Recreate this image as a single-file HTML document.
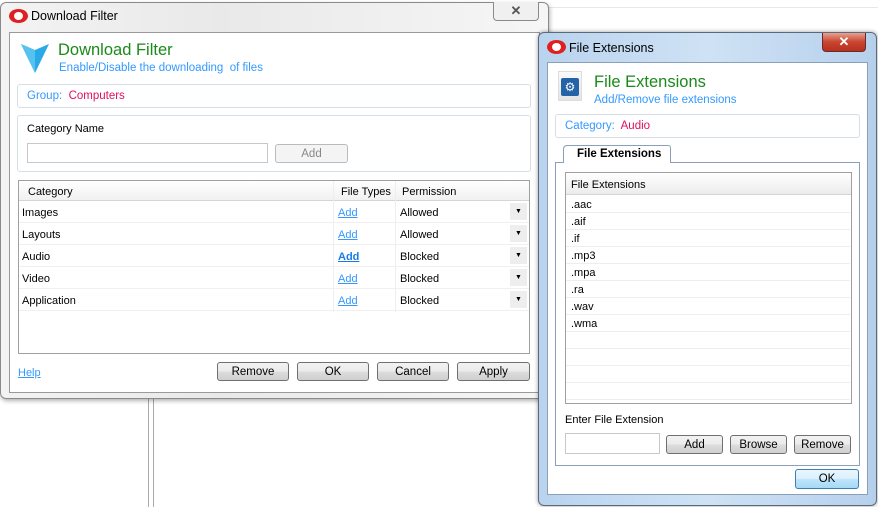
<!DOCTYPE html><html><head><style>
*{box-sizing:border-box;margin:0;padding:0}
body{width:878px;height:507px;background:#fff;position:relative;overflow:hidden;font-family:"Liberation Sans",sans-serif;font-size:11px;color:#000}
.a{position:absolute}
.btn{position:absolute;border:1px solid #707070;border-radius:3px;background:linear-gradient(#f2f2f2 0,#ebebeb 50%,#dddddd 51%,#cfcfcf 100%);text-align:center;font-size:11.5px;line-height:18px}
.box{position:absolute;border:1px solid #d5dfe5;border-radius:3px;background:#fff}
.lnk{color:#3399ff;text-decoration:underline}
.row{position:absolute;left:0;right:0;height:22px;border-bottom:1px solid #f0f0f0}
.row span{margin-top:1px}
</style></head><body>
<div class="a" style="left:148px;top:398px;width:1px;height:109px;background:#aaa"></div>
<div class="a" style="left:153px;top:398px;width:1px;height:109px;background:#aaa"></div>
<div class="a" style="left:548px;top:7px;width:330px;height:1px;background:#e8e8e8"></div>

<!-- Window 1 -->
<div class="a" style="left:0;top:2px;width:549px;height:397px;border:1px solid #8a8a8a;border-radius:6px;background:linear-gradient(90deg,#f3f3f3,#e9e9e9 40%,#f6f6f6);box-shadow:1px 2px 4px rgba(0,0,0,.3)"></div>
<div class="a" style="left:9px;top:9px;width:19px;height:14px;background:#e02020;border-radius:50%"></div>
<div class="a" style="left:14px;top:12px;width:9px;height:8px;background:#fff;border-radius:50%"></div>
<div class="a" style="left:31px;top:9px;font-size:12.5px">Download Filter</div>
<div class="a" style="left:493px;top:2px;width:46px;height:19px;border:1px solid #8a8a8a;border-top:none;border-radius:0 0 4px 4px;background:#f0f0f0;text-align:center;font-size:13px;line-height:18px;color:#555;font-weight:bold">✕</div>
<div class="a" style="left:9px;top:32px;width:531px;height:361px;border:1px solid #9a9a9a;background:#fff"></div>
<svg class="a" style="left:20px;top:40px" width="30" height="34" viewBox="0 0 30 34"><path d="M1 4 L15 10 L29 4 L15 33 Z" fill="#29a9e6"/><path d="M1 4 L15 10 L15 33 Z" fill="#56c2f0"/></svg>
<div class="a" style="left:58px;top:41px;font-size:16.5px;color:#1a8a1a">Download Filter</div>
<div class="a" style="left:59px;top:62px;font-size:11.5px;color:#3399ff">Enable/Disable the downloading&nbsp; of files</div>
<div class="box" style="left:17px;top:84px;width:514px;height:24px"></div>
<div class="a" style="left:27px;top:90px;font-size:11.5px;color:#3399ff">Group:&nbsp; <span style="color:#e0105a">Computers</span></div>
<div class="box" style="left:17px;top:115px;width:514px;height:57px"></div>
<div class="a" style="left:27px;top:123px;font-size:11px">Category Name</div>
<div class="a" style="left:27px;top:143px;width:241px;height:20px;border:1px solid #c8c8c8;background:#fff"></div>
<div class="btn" style="left:275px;top:144px;width:73px;height:19px;border-color:#bbb;background:#f4f4f4;color:#888">Add</div>
<div class="a" style="left:18px;top:180px;width:512px;height:174px;border:1px solid #a0a0a0;background:#fff">
 <div class="a" style="left:0;top:0;width:510px;height:20px;background:linear-gradient(#fff,#f1f1f1);border-bottom:1px solid #d5d5d5"></div>
 <div class="a" style="left:9px;top:5px">Category</div>
 <div class="a" style="left:322px;top:5px">File Types</div>
 <div class="a" style="left:383px;top:5px">Permission</div>
 <div class="a" style="left:314px;top:0;width:1px;height:131px;background:#eee"></div>
 <div class="a" style="left:376px;top:0;width:1px;height:131px;background:#eee"></div>
 <div class="a" style="left:0;top:20px;width:510px;height:111px">
  <div class="row" style="top:0"><span class="a" style="left:3px;top:5px">Images</span><span class="a lnk" style="left:319px;top:5px">Add</span><span class="a" style="left:381px;top:5px">Allowed</span><span class="a" style="left:491px;top:1px;width:17px;height:17px;background:#eee;text-align:center;font-size:7px;line-height:17px">▼</span></div>
  <div class="row" style="top:22px"><span class="a" style="left:3px;top:5px">Layouts</span><span class="a lnk" style="left:319px;top:5px">Add</span><span class="a" style="left:381px;top:5px">Allowed</span><span class="a" style="left:491px;top:1px;width:17px;height:17px;background:#eee;text-align:center;font-size:7px;line-height:17px">▼</span></div>
  <div class="row" style="top:44px"><span class="a" style="left:3px;top:5px">Audio</span><span class="a lnk" style="left:319px;top:5px;font-weight:bold;color:#1a7ae8">Add</span><span class="a" style="left:381px;top:5px">Blocked</span><span class="a" style="left:491px;top:1px;width:17px;height:17px;background:#eee;text-align:center;font-size:7px;line-height:17px">▼</span></div>
  <div class="row" style="top:66px"><span class="a" style="left:3px;top:5px">Video</span><span class="a lnk" style="left:319px;top:5px">Add</span><span class="a" style="left:381px;top:5px">Blocked</span><span class="a" style="left:491px;top:1px;width:17px;height:17px;background:#eee;text-align:center;font-size:7px;line-height:17px">▼</span></div>
  <div class="row" style="top:88px"><span class="a" style="left:3px;top:5px">Application</span><span class="a lnk" style="left:319px;top:5px">Add</span><span class="a" style="left:381px;top:5px">Blocked</span><span class="a" style="left:491px;top:1px;width:17px;height:17px;background:#eee;text-align:center;font-size:7px;line-height:17px">▼</span></div>
 </div>
</div>
<div class="a lnk" style="left:18px;top:367px">Help</div>
<div class="btn" style="left:217px;top:362px;width:72px;height:19px">Remove</div>
<div class="btn" style="left:297px;top:362px;width:72px;height:19px">OK</div>
<div class="btn" style="left:377px;top:362px;width:72px;height:19px">Cancel</div>
<div class="btn" style="left:457px;top:362px;width:73px;height:19px">Apply</div>

<!-- Window 2 -->
<div class="a" style="left:538px;top:32px;width:339px;height:474px;border:1px solid #5a6a7a;border-radius:6px;background:linear-gradient(90deg,#b9d3ee,#cfe2f5 50%,#b6d0ec);box-shadow:0 0 4px rgba(0,0,0,.4)"></div>
<div class="a" style="left:547px;top:40px;width:19px;height:14px;background:#e02020;border-radius:50%"></div>
<div class="a" style="left:552px;top:43px;width:9px;height:8px;background:#fff;border-radius:50%"></div>
<div class="a" style="left:569px;top:41px;font-size:12.5px">File Extensions</div>
<div class="a" style="left:822px;top:33px;width:44px;height:19px;border:1px solid #6b2a2a;border-top:none;border-radius:0 0 4px 4px;background:linear-gradient(#e8a090,#c8452f 50%,#b83020);text-align:center;font-size:13px;line-height:18px;color:#fff;font-weight:bold">✕</div>
<div class="a" style="left:547px;top:62px;width:321px;height:433px;border:1px solid #8aa0b8;background:#fff"></div>
<div class="a" style="left:558px;top:71px;width:24px;height:30px;background:linear-gradient(#fafafa,#e4e4e4);border:1px solid #ddd"></div>
<div class="a" style="left:561px;top:78px;width:18px;height:18px;background:#2563a8;border-radius:2px;color:#fff;font-size:12px;text-align:center;line-height:18px">⚙</div>
<div class="a" style="left:594px;top:73px;font-size:16.5px;color:#1a8a1a">File Extensions</div>
<div class="a" style="left:594px;top:94px;font-size:11.5px;color:#3399ff">Add/Remove file extensions</div>
<div class="box" style="left:555px;top:114px;width:305px;height:24px"></div>
<div class="a" style="left:565px;top:120px;font-size:11.5px;color:#3399ff">Category:&nbsp; <span style="color:#e0105a">Audio</span></div>
<div class="a" style="left:555px;top:162px;width:305px;height:304px;border:1px solid #8aa0b8;background:#fff"></div>
<div class="a" style="left:563px;top:145px;width:108px;height:18px;border:1px solid #8aa0b8;border-bottom:none;border-radius:4px 3px 0 0;background:#fff;font-weight:bold;font-size:11.5px;padding:2px 0 0 13px">File Extensions</div>
<div class="a" style="left:565px;top:172px;width:287px;height:232px;border:1px solid #a0a0a0;background:#fff">
 <div class="a" style="left:0;top:0;width:285px;height:22px;background:linear-gradient(#fff,#ececec);border-bottom:1px solid #d5d5d5"></div>
 <div class="a" style="left:5px;top:6px">File Extensions</div>
 <div class="a" style="left:0;top:23px;width:284px">
  <div style="height:17px;border-bottom:1px solid #eee;padding:3px 5px">.aac</div>
  <div style="height:17px;border-bottom:1px solid #eee;padding:3px 5px">.aif</div>
  <div style="height:17px;border-bottom:1px solid #eee;padding:3px 5px">.if</div>
  <div style="height:17px;border-bottom:1px solid #eee;padding:3px 5px">.mp3</div>
  <div style="height:17px;border-bottom:1px solid #eee;padding:3px 5px">.mpa</div>
  <div style="height:17px;border-bottom:1px solid #eee;padding:3px 5px">.ra</div>
  <div style="height:17px;border-bottom:1px solid #eee;padding:3px 5px">.wav</div>
  <div style="height:17px;border-bottom:1px solid #eee;padding:3px 5px">.wma</div>
  <div style="height:17px;border-bottom:1px solid #eee"></div>
  <div style="height:17px;border-bottom:1px solid #eee"></div>
  <div style="height:17px;border-bottom:1px solid #eee"></div>
  <div style="height:17px;border-bottom:1px solid #eee"></div>
 </div>
</div>
<div class="a" style="left:565px;top:414px;font-size:11px">Enter File Extension</div>
<div class="a" style="left:565px;top:433px;width:95px;height:21px;border:1px solid #c8c8c8;background:#fff"></div>
<div class="btn" style="left:666px;top:435px;width:57px;height:19px">Add</div>
<div class="btn" style="left:730px;top:435px;width:57px;height:19px">Browse</div>
<div class="btn" style="left:794px;top:435px;width:57px;height:19px">Remove</div>
<div class="btn" style="left:795px;top:469px;width:64px;height:20px;border-color:#3c7fb1;background:linear-gradient(#eaf6fd,#d9f0fc 50%,#bee6fd 51%,#a7d9f5)">OK</div>
</body></html>
